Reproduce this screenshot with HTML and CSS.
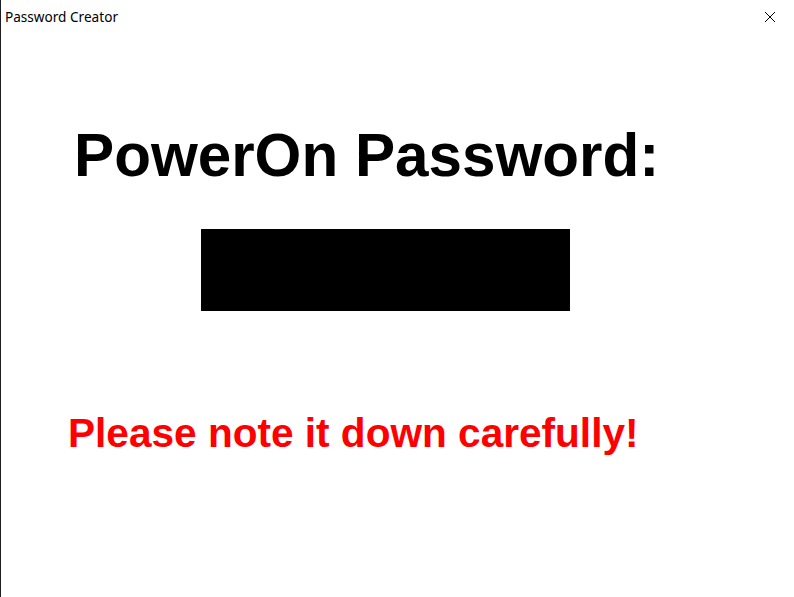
FILE: index.html
```html
<!DOCTYPE html>
<html>
<head>
<meta charset="utf-8">
<title>Password Creator</title>
<link rel="stylesheet" href="styles.css">
</head>
<body>
<div class="window">
  <div class="titlebar">
    <span class="title">Password Creator</span>
    <span class="close">
      <svg width="12" height="12" viewBox="0 0 12 12"><path d="M1 1 L11 11 M11 1 L1 11" stroke="#000" stroke-width="1" fill="none"/></svg>
    </span>
  </div>
  <div class="content">
    <h1 class="heading">PowerOn Password:</h1>
    <div class="masked"></div>
    <p class="note">Please note it down carefully!</p>
  </div>
</div>
</body>
</html>
```
FILE: styles.css
```css
html, body {
  margin: 0;
  padding: 0;
  background: #fff;
}
.window {
  width: 794px;
  height: 597px;
  box-sizing: border-box;
  border-left: 1px solid #1e1e1e;
  background: #fff;
  display: flex;
  flex-direction: column;
  overflow: hidden;
}
.titlebar {
  height: 32px;
  display: flex;
  align-items: flex-start;
  justify-content: space-between;
  font-family: "Noto Sans", "Open Sans", sans-serif;
  font-size: 13.6px;
  color: #000;
}
.title {
  padding-left: 4px;
  padding-top: 7px;
  line-height: 19px;
}
.close {
  width: 46px;
  height: 30px;
  display: flex;
  align-items: center;
  justify-content: center;
  margin-right: 1px;
  padding-top: 2px;
}
.close svg {
  display: block;
}
.content {
  display: flex;
  flex-direction: column;
  font-family: "Liberation Sans", Arial, sans-serif;
  font-weight: bold;
}
.heading {
  margin: 94px 0 0 73px;
  font-size: 60.2px;
  line-height: 60px;
  font-weight: bold;
  color: #000;
}
.masked {
  margin: 43px 0 0 200px;
  width: 369px;
  height: 82px;
  background: #000;
}
.note {
  margin: 102px 0 0 67px;
  font-size: 40.6px;
  line-height: 40px;
  color: #ff0000;
}
```
